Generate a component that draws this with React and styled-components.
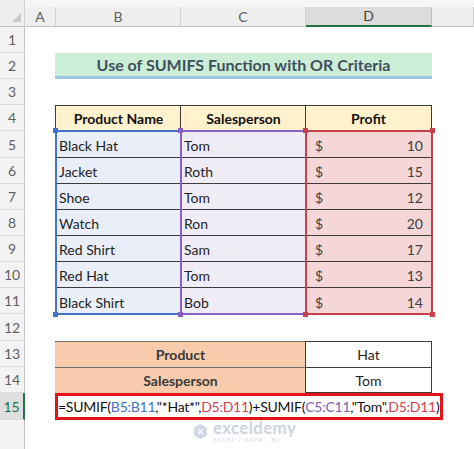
import React from 'react';
import styled, { createGlobalStyle } from 'styled-components';

const FONT = "Lato, 'Open Sans', Arial, sans-serif";

const COLORS = {
  headerBg: '#efefef',
  headerLine: '#d0d0d0',
  headerText: '#5f5f5f',
  excelGreen: '#217346',
  cellLine: '#3c3c3c',
  blue: '#4472c4',
  purple: '#8b5fbf',
  red: '#c8404c',
};

const products = [
  { name: 'Black Hat', person: 'Tom', profit: 10 },
  { name: 'Jacket', person: 'Roth', profit: 15 },
  { name: 'Shoe', person: 'Tom', profit: 12 },
  { name: 'Watch', person: 'Ron', profit: 20 },
  { name: 'Red Shirt', person: 'Sam', profit: 17 },
  { name: 'Red Hat', person: 'Tom', profit: 13 },
  { name: 'Black Shirt', person: 'Bob', profit: 14 },
];

const GlobalStyle = createGlobalStyle`
  html, body {
    margin: 0;
    padding: 0;
    background: #ffffff;
  }
  body {
    font-family: ${FONT};
    -webkit-font-smoothing: antialiased;
  }
`;

const App = () => {
  return (
    <>
      <GlobalStyle />
      <Sheet>
        <Corner>
          <CornerMark viewBox="0 0 10 10">
            <polygon points="10,0 10,10 0,10" fill="#c9c9c9" />
          </CornerMark>
        </Corner>
        {['A', 'B', 'C', 'D', ''].map((col) => (
          <ColHeader key={col || 'E'} $selected={col === 'D'}>
            {col}
          </ColHeader>
        ))}

        {Array.from({ length: 15 }, (_, i) => (
          <RowHeader key={i} $row={i + 2} $selected={i === 14}>
            {i + 1}
          </RowHeader>
        ))}
        <RowHeaderRest />

        <Title>Use of SUMIFS Function with OR Criteria</Title>

        <HeadCell $col={3}>Product Name</HeadCell>
        <HeadCell $col={4}>Salesperson</HeadCell>
        <HeadCell $col={5}>Profit</HeadCell>

        <Range $col={3} $color={COLORS.blue} $fill="#e9eef8">
          {products.map((p) => (
            <DataCell key={p.name}>{p.name}</DataCell>
          ))}
          <Handle $top $left $color={COLORS.blue} />
          <Handle $left $color={COLORS.blue} />
        </Range>

        <Range $col={4} $color={COLORS.purple} $fill="#efecf6">
          {products.map((p) => (
            <DataCell key={p.name}>{p.person}</DataCell>
          ))}
          <Handle $top $left $color={COLORS.purple} />
          <Handle $left $color={COLORS.purple} />
        </Range>

        <Range $col={5} $color={COLORS.red} $fill="#f5d7d7" $closed>
          {products.map((p) => (
            <MoneyCell key={p.name}>
              <span>$</span>
              <span>{p.profit}</span>
            </MoneyCell>
          ))}
          <Handle $top $left $color={COLORS.red} />
          <Handle $left $color={COLORS.red} />
          <Handle $top $color={COLORS.red} />
          <Handle $color={COLORS.red} />
        </Range>

        <LabelCell $row={14}>Product</LabelCell>
        <ValueCell $row={14}>Hat</ValueCell>
        <LabelCell $row={15}>Salesperson</LabelCell>
        <ValueCell $row={15}>Tom</ValueCell>

        <Formula>
          =SUMIF(<Ref $color={COLORS.blue}>B5:B11</Ref>,"*Hat*",
          <Ref $color="#d0434f">D5:D11</Ref>)+SUMIF(
          <Ref $color="#8063b3">C5:C11</Ref>,"Tom",
          <Ref $color="#d0434f">D5:D11</Ref>)
        </Formula>

        <Watermark>
          <LogoMark viewBox="0 0 16 16">
            <path
              d="M8 1 L14 4.5 L14 11.5 L8 15 L2 11.5 L2 4.5 Z"
              fill="#c8d0e2"
            />
            <path d="M5.5 5.5 L10.5 10.5 M10.5 5.5 L5.5 10.5" stroke="#eef1f7" strokeWidth="1.6" />
          </LogoMark>
          <WatermarkText>
            <strong>exceldemy</strong>
            <small>EXCEL · DATA · BI</small>
          </WatermarkText>
        </Watermark>
      </Sheet>
    </>
  );
};

const Sheet = styled.div`
  position: relative;
  display: grid;
  grid-template-columns: 25px 31px 125px 125px 126px 1fr;
  grid-template-rows:
    27px 26px 26px 26px 26px 27px 26px 26px 26px 26px 26px 26px
    27px 26px 26px 27px 1fr;
  width: 474px;
  height: 449px;
  overflow: hidden;
  background: #ffffff;
  color: #1e1e1e;
`;

const Corner = styled.div`
  grid-row: 1;
  grid-column: 1;
  position: relative;
  background: ${COLORS.headerBg};
  border-right: 1px solid ${COLORS.headerLine};
  border-bottom: 1px solid #c4c4c4;
`;

const CornerMark = styled.svg`
  position: absolute;
  right: 3px;
  bottom: 4px;
  width: 9px;
  height: 9px;
`;

const ColHeader = styled.div`
  display: flex;
  align-items: center;
  justify-content: center;
  margin-top: 7px;
  box-shadow: 0 -7px 0 #f6f6f6;
  background: ${(p) => (p.$selected ? '#dcdcdc' : COLORS.headerBg)};
  border-right: 1px solid ${(p) => (p.$selected ? '#bdbdbd' : COLORS.headerLine)};
  border-bottom: ${(p) => (p.$selected ? `2px solid ${COLORS.excelGreen}` : '1px solid #c4c4c4')};
  color: ${(p) => (p.$selected ? '#444' : COLORS.headerText)};
  font-size: 14px;
  line-height: 1;

  &:last-child {
    border-right: none;
  }
`;

const RowHeader = styled.div`
  grid-row: ${(p) => p.$row};
  grid-column: 1;
  display: flex;
  align-items: center;
  justify-content: center;
  background: ${(p) => (p.$selected ? '#dedede' : '#f3f3f3')};
  border-bottom: 1px solid #dadada;
  border-right: ${(p) => (p.$selected ? `2px solid ${COLORS.excelGreen}` : '1px solid #c4c4c4')};
  color: ${(p) => (p.$selected ? COLORS.excelGreen : COLORS.headerText)};
  font-size: 14px;
`;

const RowHeaderRest = styled.div`
  grid-row: 17;
  grid-column: 1;
  background: #f3f3f3;
  border-right: 1px solid #c4c4c4;
`;

const Title = styled.div`
  grid-row: 3;
  grid-column: 3 / 6;
  display: flex;
  align-items: center;
  justify-content: center;
  margin-left: -1px;
  background: #cdeed6;
  border-bottom: 3px solid #9dc3e6;
  color: #3f4f60;
  font-size: 16px;
  font-weight: 700;
`;

const HeadCell = styled.div`
  grid-row: 5;
  grid-column: ${(p) => p.$col};
  display: flex;
  align-items: center;
  justify-content: center;
  margin-left: -1px;
  background: #fff2cc;
  border: 1px solid ${COLORS.cellLine};
  border-bottom: none;
  ${(p) => (p.$col !== 5 ? 'border-right: none;' : '')}
  font-size: 14px;
  font-weight: 700;
  color: #111;
`;

const Range = styled.div`
  grid-row: 6 / 13;
  grid-column: ${(p) => p.$col};
  position: relative;
  display: grid;
  grid-template-rows: 27px repeat(6, 26px);
  background: ${(p) => p.$fill};

  &::after {
    content: '';
    position: absolute;
    top: -1px;
    left: -1px;
    right: ${(p) => (p.$closed ? '-1px' : '0')};
    bottom: -1px;
    border: 2px solid ${(p) => p.$color};
    ${(p) => (p.$closed ? '' : 'border-right: none;')}
    pointer-events: none;
  }
`;

const Handle = styled.span`
  position: absolute;
  z-index: 2;
  width: 5px;
  height: 5px;
  background: ${(p) => p.$color};
  ${(p) => (p.$top ? 'top: -3px;' : 'bottom: -3px;')}
  ${(p) => (p.$left ? 'left: -3px;' : 'right: -3px;')}
`;

const DataCell = styled.div`
  display: flex;
  align-items: center;
  padding: 2px 3px 0;
  border-bottom: 1px solid ${COLORS.cellLine};
  font-size: 14px;
  color: #1e1e1e;

  &:nth-child(7) {
    border-bottom: none;
  }
`;

const MoneyCell = styled(DataCell)`
  justify-content: space-between;
  padding: 2px 9px 0 9px;
  color: #404040;
`;

const LabelCell = styled.div`
  grid-row: ${(p) => p.$row};
  grid-column: 3 / 5;
  display: flex;
  align-items: center;
  justify-content: center;
  margin-left: -1px;
  background: #f8cbad;
  border-top: 1px solid #6f6f6f;
  font-size: 14px;
  font-weight: 700;
  color: #3a3a3a;
`;

const ValueCell = styled.div`
  grid-row: ${(p) => p.$row};
  grid-column: 5;
  display: flex;
  align-items: center;
  justify-content: center;
  margin-left: -1px;
  border: 1px solid ${COLORS.cellLine};
  border-bottom: ${(p) => (p.$row === 15 ? `1px solid ${COLORS.cellLine}` : 'none')};
  font-size: 14px;
  color: #1e1e1e;
`;

const Formula = styled.div`
  grid-row: 16;
  grid-column: 3 / 6;
  display: flex;
  align-items: center;
  margin: 0 -11px 0 -1px;
  border: 3px solid #e3121b;
  white-space: pre;
  font-size: 14px;
  letter-spacing: -0.25px;
  color: #111;
`;

const Ref = styled.span`
  color: ${(p) => p.$color};
`;

const Watermark = styled.div`
  position: absolute;
  left: 192px;
  top: 420px;
  display: flex;
  align-items: center;
  gap: 4px;
  opacity: 0.85;
`;

const LogoMark = styled.svg`
  width: 17px;
  height: 17px;
`;

const WatermarkText = styled.div`
  display: flex;
  flex-direction: column;
  line-height: 1;

  strong {
    font-size: 17px;
    line-height: 15px;
    font-weight: 700;
    color: #c6cde0;
    letter-spacing: 0.3px;
  }

  small {
    margin-top: 3px;
    font-size: 5px;
    line-height: 5px;
    letter-spacing: 1.6px;
    color: #c6cde0;
  }
`;

export default App;
